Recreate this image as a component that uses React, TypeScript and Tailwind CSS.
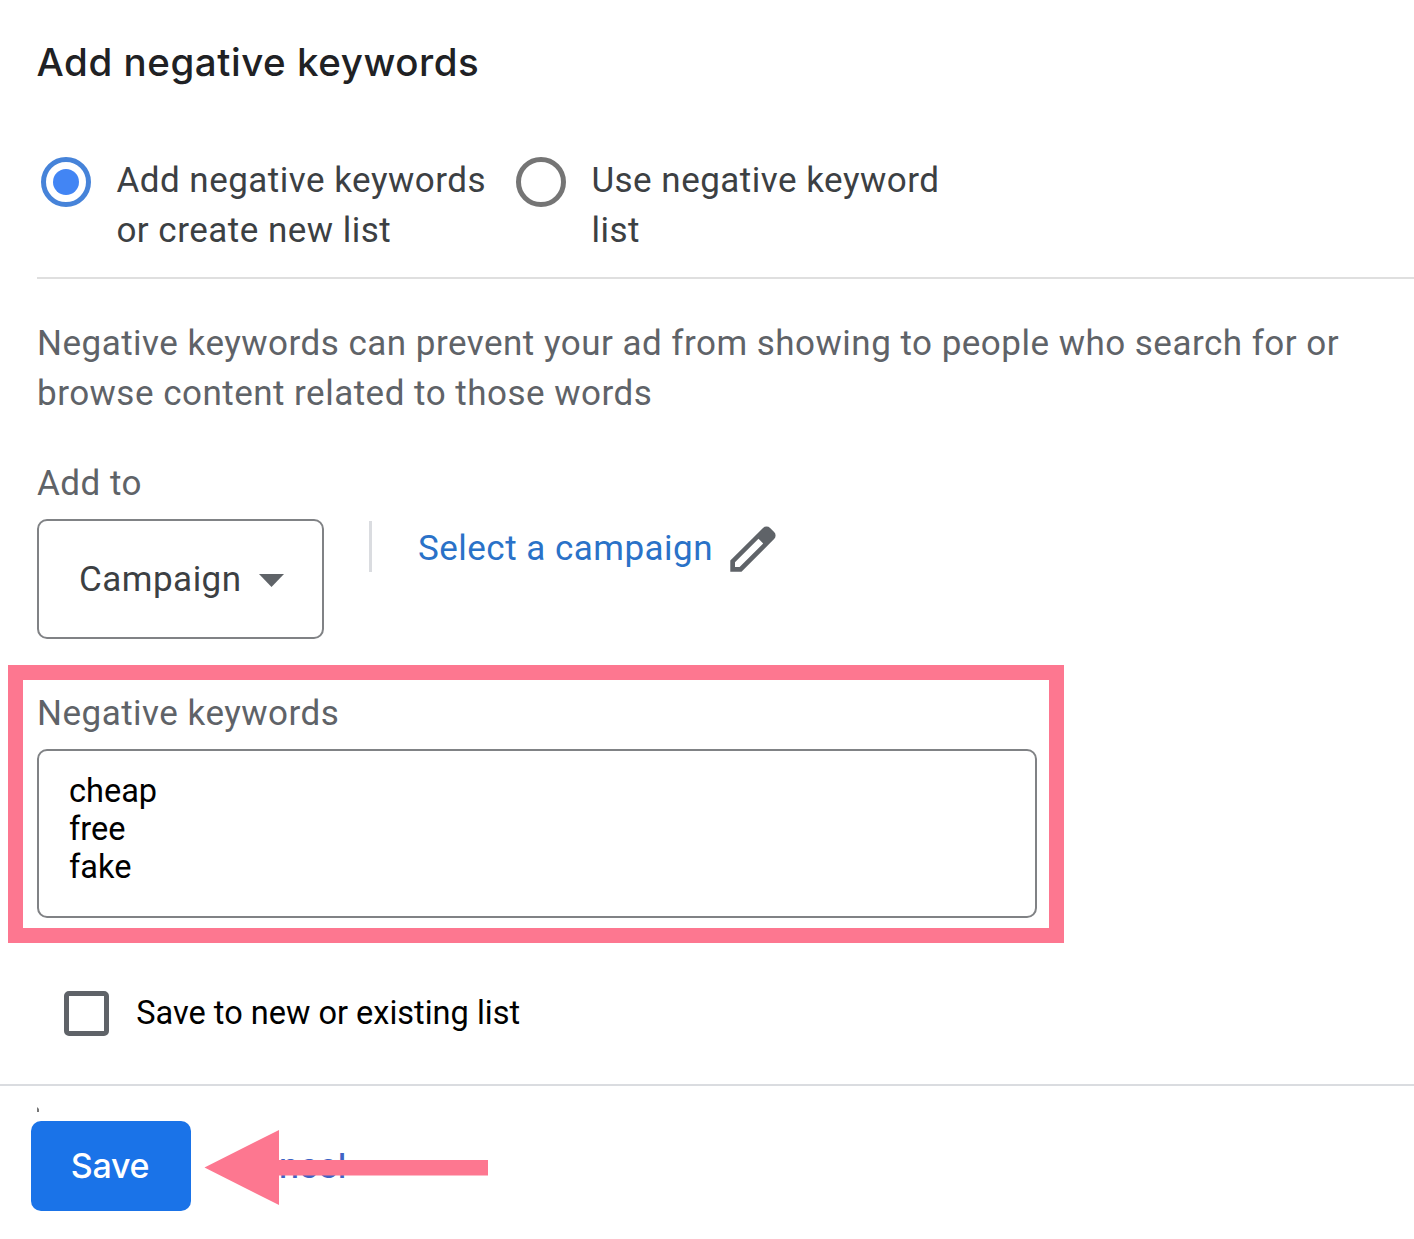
import React from 'react';

const keywords = ['cheap', 'free', 'fake'];

const options = [
  { lines: ['Add negative keywords', 'or create new list'], checked: true },
  { lines: ['Use negative keyword', 'list'], checked: false },
];

const PencilIcon: React.FC = () => (
  <svg width="48" height="48" viewBox="0 0 48 48" fill="none">
    <path
      fillRule="evenodd"
      clipRule="evenodd"
      fill="#5f6368"
      d="M1.3 46.7V35.5L34 2.9a5 5 0 0 1 7.1 0l4 4a5 5 0 0 1 0 7.1L12.5 46.7H1.3ZM6 42h4.6L34.2 18.5l-4.7-4.7L6 37.3V42Z"
    />
  </svg>
);

const Radio: React.FC<{ checked: boolean }> = ({ checked }) => (
  <span
    className={`mt-px flex h-[50px] w-[50px] shrink-0 items-center justify-center rounded-full border-[5px] ${
      checked ? 'border-[#4683d9]' : 'border-[#757575]'
    }`}
  >
    {checked && <span className="h-[26px] w-[26px] rounded-full bg-[#4285f4]" />}
  </span>
);

const App: React.FC = () => {
  return (
    <div className="h-[1239px] w-[1414px] overflow-hidden bg-white font-['Roboto',sans-serif] text-[35px] leading-[50px] tracking-[0.485px] text-[#5f6368]">
      <h1 className="ml-[36.5px] pt-[37px] font-['Inter',sans-serif] text-[38.5px] font-medium tracking-[0.55px] text-[#202124]">
        <span>Add negative keywords</span>
      </h1>

      {/* Mode selection */}
      <div className="ml-[37px] mt-[69px] flex h-[123px] border-b-2 border-[#dfdfdf] pl-[4.4px] text-[#3c4043]">
        {options.map(({ lines, checked }) => (
          <label key={lines[0]} className="flex w-[475px] gap-[25px]">
            <Radio checked={checked} />
            <span className="whitespace-nowrap">
              {lines.map((line) => (
                <span key={line} className="block">{line}</span>
              ))}
            </span>
          </label>
        ))}
      </div>

      <p className="ml-[37px] mt-10 whitespace-nowrap">
        Negative keywords can prevent your ad from showing to people who search for or
        <br />
        browse content related to those words
      </p>

      {/* Campaign picker */}
      <div className="ml-[37px] mt-10">Add to</div>
      <div className="ml-[37px] mt-2.5 flex items-start">
        <button className="flex h-[120px] w-[287px] items-center rounded-[10px] border-2 border-[#808285] pl-10 text-[#3c4043]">
          <span className="pt-0.5">Campaign</span>
          <svg className="ml-[17px] mt-0.5" width="25" height="13" viewBox="0 0 25 13" fill="#5f6368">
            <path d="M0 0h25L12.5 13z" />
          </svg>
        </button>
        <div className="ml-[45px] mt-0.5 h-[51px] w-[3px] bg-[#dadce0]" />
        <a className="ml-[46px] mt-[5px] text-[#2a72c8]">Select a campaign</a>
        <span className="ml-4 mt-1.5">
          <PencilIcon />
        </span>
      </div>

      {/* Keyword entry */}
      <div className="ml-[7.5px] mt-[26px] h-[278px] w-[1056px] border-[15px] border-[#fd7790] pl-[14.5px] pt-[9px]">
        <div>Negative keywords</div>
        <div className="mt-2.5 h-[169px] w-[1000px] rounded-[10px] border-2 border-[#808285] pl-[30px] pt-[21px] text-[32.5px] leading-[38px] tracking-normal text-black">
          {keywords.map((keyword) => (
            <div key={keyword}>{keyword}</div>
          ))}
        </div>
      </div>

      <label className="ml-16 mt-[45px] flex h-[50px] items-center text-[32.5px] tracking-normal text-black">
        <span className="h-[45px] w-[45px] rounded-[5px] border-[5px] border-[#5f6368]" />
        <span className="ml-[27.3px]">Save to new or existing list</span>
      </label>

      {/* Footer */}
      <div className="relative mt-[46px] h-[153px] border-t-2 border-[#dadce0] pl-[31px] pt-[35px] font-['Inter',sans-serif] text-[34px] font-medium tracking-[-0.3px]">
        <div className="flex h-[90px] items-center">
          <button className="h-[90px] w-[160px] rounded-[10px] bg-[#1a73e8] pr-0.5 text-white">
            <span>Save</span>
          </button>
          <span className="ml-[44px] text-[#3f63c4]">Cancel</span>
        </div>
        <svg className="absolute left-[37px] top-[21px]" width="3" height="5" viewBox="0 0 3 5" fill="#777">
          <path d="M0 0l2 2v3H0z" />
        </svg>
        <svg className="absolute left-[204px] top-[44px]" width="285" height="76" viewBox="0 0 285 76" fill="#fd7790">
          <path d="M.5 37.5 75 0v30h209v15.5H75V75z" />
        </svg>
      </div>
    </div>
  );
};

export default App;
